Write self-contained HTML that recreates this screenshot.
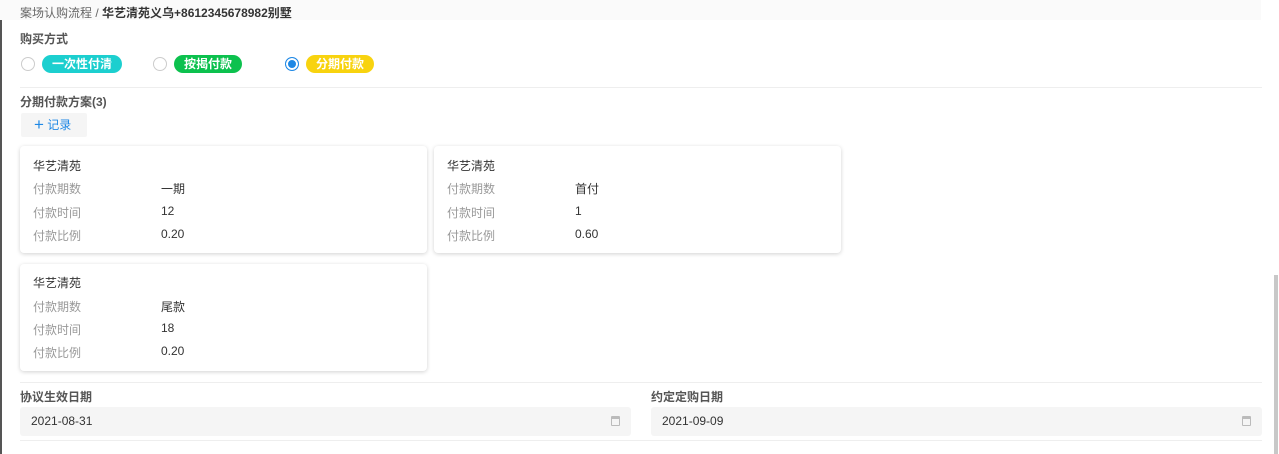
<!DOCTYPE html>
<html><head><meta charset="utf-8"><style>
*{margin:0;padding:0;box-sizing:border-box}
body{width:1279px;height:454px;overflow:hidden;background:#fff;font-family:"Liberation Sans","Noto Sans CJK SC",sans-serif;font-size:12px;color:#333;position:relative}
.a{position:absolute}
.hdr{left:0;top:0;width:1261px;height:20px;background:#fafafa}
.line{height:1px;background:#eee;left:20px;width:1242px}
.lbl{font-weight:bold;color:#555}
.radio{width:14px;height:14px;border:1px solid #ccc;border-radius:50%;background:#fff}
.tag{height:18px;line-height:18px;border-radius:9px;color:#fff;font-weight:bold;padding:0 10px;font-size:12px}
.card{background:#fff;border-radius:4px;box-shadow:0 1px 4px rgba(0,0,0,.18);width:407px;height:107px}
.card div{position:absolute;font-size:12px}
.k{color:#999;left:13px}.v{color:#333;left:141px}
.inp{background:#f5f5f5;border-radius:3px;height:29px;line-height:29px;padding-left:11px;color:#333}
.cal{position:absolute;right:11px;top:9px;width:9px;height:10px;border:1.5px solid #bbb;border-top-width:3px;border-radius:1px}
</style></head><body>
<div class="a" style="left:0;top:0;width:2px;height:454px;background:#555"></div>
<div class="a hdr"></div>
<div class="a" style="left:20px;top:4px;color:#666">案场认购流程 / <b style="color:#333">华艺清苑义乌+8612345678982别墅</b></div>
<div class="a lbl" style="left:20px;top:30px">购买方式</div>
<div class="a radio" style="left:21px;top:57px"></div>
<div class="a tag" style="left:42px;top:55px;background:#1ccfcf">一次性付清</div>
<div class="a radio" style="left:153px;top:57px"></div>
<div class="a tag" style="left:174px;top:55px;background:#0cc14e">按揭付款</div>
<div class="a radio" style="left:285px;top:57px;border-color:#1e88e5;box-shadow:inset 0 0 0 2px #fff;background:#1e88e5"></div>
<div class="a tag" style="left:306px;top:55px;background:#f8d30f">分期付款</div>
<div class="a line" style="top:87px"></div>
<div class="a lbl" style="left:20px;top:93px">分期付款方案(3)</div>
<div class="a" style="left:21px;top:113px;width:66px;height:24px;background:#f5f5f5;border-radius:2px;color:#1e88e5;line-height:24px;padding-left:13px"><span style="font-size:17px;vertical-align:-1px">+</span> 记录</div>
<div class="a card" style="left:20px;top:146px">
<div style="left:13px;top:11px">华艺清苑</div>
<div class="k" style="top:34px">付款期数</div><div class="v" style="top:34px">一期</div>
<div class="k" style="top:58px">付款时间</div><div class="v" style="top:58px">12</div>
<div class="k" style="top:81px">付款比例</div><div class="v" style="top:81px">0.20</div></div>
<div class="a card" style="left:434px;top:146px">
<div style="left:13px;top:11px">华艺清苑</div>
<div class="k" style="top:34px">付款期数</div><div class="v" style="top:34px">首付</div>
<div class="k" style="top:58px">付款时间</div><div class="v" style="top:58px">1</div>
<div class="k" style="top:81px">付款比例</div><div class="v" style="top:81px">0.60</div></div>
<div class="a card" style="left:20px;top:264px">
<div style="left:13px;top:10px">华艺清苑</div>
<div class="k" style="top:34px">付款期数</div><div class="v" style="top:34px">尾款</div>
<div class="k" style="top:57px">付款时间</div><div class="v" style="top:57px">18</div>
<div class="k" style="top:80px">付款比例</div><div class="v" style="top:80px">0.20</div></div>
<div class="a line" style="top:382px"></div>
<div class="a lbl" style="left:20px;top:388px">协议生效日期</div>
<div class="a lbl" style="left:651px;top:388px">约定定购日期</div>
<div class="a inp" style="left:20px;top:407px;width:611px">2021-08-31<span class="cal"></span></div>
<div class="a inp" style="left:651px;top:407px;width:611px">2021-09-09<span class="cal"></span></div>
<div class="a line" style="top:440px"></div>
<div class="a" style="left:1274px;top:275px;width:4px;height:179px;background:#c8c8c8"></div>
</body></html>
